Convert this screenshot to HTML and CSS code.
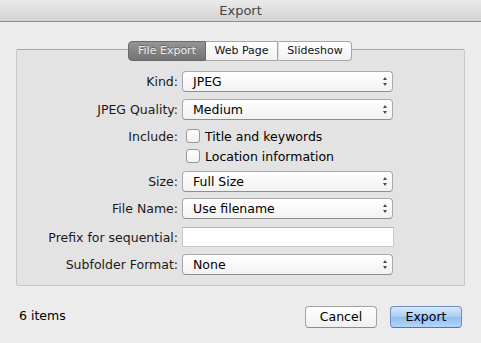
FILE: index.html
```html
<!DOCTYPE html>
<html>
<head>
<meta charset="utf-8">
<title>Export</title>
<link rel="stylesheet" href="styles.css">
</head>
<body>
<div class="window">
  <div class="titlebar">Export</div>
  <div class="content">
    <div class="tabs">
      <div class="tab active t1">File Export</div>
      <div class="tab t2">Web Page</div>
      <div class="tab sep t3">Slideshow</div>
    </div>
    <div class="panel">
      <div class="row r-kind">
        <div class="label">Kind:</div>
        <div class="select"><span>JPEG</span><span class="arrows"></span></div>
      </div>
      <div class="row r-quality">
        <div class="label">JPEG Quality:</div>
        <div class="select"><span>Medium</span><span class="arrows"></span></div>
      </div>
      <div class="row crow r-title">
        <div class="label">Include:</div>
        <label class="check"><span class="box"></span>Title and keywords</label>
      </div>
      <div class="row crow r-loc">
        <div class="label"></div>
        <label class="check"><span class="box"></span>Location information</label>
      </div>
      <div class="row r-size">
        <div class="label">Size:</div>
        <div class="select"><span>Full Size</span><span class="arrows"></span></div>
      </div>
      <div class="row r-name">
        <div class="label">File Name:</div>
        <div class="select"><span>Use filename</span><span class="arrows"></span></div>
      </div>
      <div class="row r-prefix">
        <div class="label">Prefix for sequential:</div>
        <div class="field"></div>
      </div>
      <div class="row r-sub">
        <div class="label">Subfolder Format:</div>
        <div class="select"><span>None</span><span class="arrows"></span></div>
      </div>
    </div>
    <div class="footer">
      <div class="count">6 items</div>
      <div class="buttons">
        <div class="btn">Cancel</div>
        <div class="btn primary">Export</div>
      </div>
    </div>
  </div>
</div>
</body>
</html>
```

FILE: styles.css
```css
html, body {
  margin: 0;
  padding: 0;
}
body {
  background: #ececec;
  font-family: "DejaVu Sans", "Liberation Sans", sans-serif;
  font-size: 12.5px;
  color: #000;
  width: 481px;
  height: 343px;
  overflow: hidden;
}
.window {
  width: 481px;
  height: 343px;
  background: #ececec;
}
.titlebar {
  height: 21px;
  border-bottom: 1px solid #8f8f8f;
  background: linear-gradient(#ebebeb, #d2d2d2);
  color: #454545;
  font-size: 13px;
  line-height: 22px;
  text-align: center;
}
.content {
  padding: 19px 16px 0 16px;
}
.tabs {
  display: flex;
  justify-content: center;
  height: 20px;
  position: relative;
  z-index: 2;
  padding-right: 1px;
}
.tab {
  box-sizing: border-box;
  height: 20px;
  line-height: 18px;
  border: 1px solid #a6a6a6;
  border-left: none;
  background: linear-gradient(#ffffff, #f1f1f1);
  text-align: center;
  white-space: nowrap;
  font-size: 11px;
  color: #111;
}
.t1 { width: 78px; }
.t2 { width: 72px; }
.t3 { width: 74px; }
.tab:first-child {
  border-left: 1px solid #a6a6a6;
  border-radius: 4px 0 0 4px;
}
.tab:last-child {
  border-radius: 0 4px 4px 0;
}
.tab.active {
  background: linear-gradient(#959595, #737373);
  border-color: #6a6a6a;
  color: #eeeeee;
  text-shadow: 0 -1px 0 rgba(0,0,0,0.3);
}
.tab.sep {
  border-left: 1px solid #dcdcdc;
}
.panel {
  margin-top: -12px;
  height: 214px;
  border: 1px solid #c7c7c7;
  border-top-color: #a9a9a9;
  border-radius: 2px;
  background: #e3e3e3;
  padding-top: 21px;
  box-sizing: content-box;
  display: flex;
  flex-direction: column;
}
.row {
  display: flex;
  align-items: center;
  height: 21px;
}
.label {
  width: 161px;
  text-align: right;
  padding-right: 4px;
  color: #1a1a1a;
  white-space: nowrap;
}
.r-quality { margin-top: 7px; }
.crow { height: 20px; }
.r-title { margin-top: 6px; }
.r-loc { margin-top: 0; }
.r-size { margin-top: 5px; }
.r-name { margin-top: 6px; }
.r-prefix { margin-top: 8px; height: 20px; }
.r-sub { margin-top: 7px; }
.select {
  height: 19px;
  border: 1px solid #a9a9a9;
  border-bottom-color: #8e8e8e;
  border-radius: 4px;
  background: linear-gradient(#ffffff, #f2f2f2);
  display: flex;
  align-items: center;
  justify-content: space-between;
  padding: 0 0 0 10px;
  box-sizing: content-box;
  width: 199px;
}
.arrows {
  width: 5px;
  height: 9px;
  margin-right: 4px;
  position: relative;
}
.arrows::before, .arrows::after {
  content: "";
  position: absolute;
  left: 0;
  border-left: 2.5px solid transparent;
  border-right: 2.5px solid transparent;
}
.arrows::before {
  top: 0;
  border-bottom: 3px solid #4a4a4a;
}
.arrows::after {
  bottom: 0;
  border-top: 3px solid #4a4a4a;
}
.field {
  width: 210px;
  height: 18px;
  background: #fff;
  border: 1px solid #c9c9c9;
  border-top-color: #b3b3b3;
}
.check {
  display: flex;
  align-items: center;
  margin-left: 4px;
}
.box {
  width: 12px;
  height: 12px;
  border: 1px solid #999;
  border-radius: 3px;
  background: linear-gradient(#ffffff, #f0f0f0);
  margin-right: 5px;
}
.footer {
  display: flex;
  justify-content: space-between;
  align-items: center;
  padding: 20px 3px 0 3px;
}
.count {
  margin-bottom: 3px;
}
.buttons {
  display: flex;
  gap: 13px;
}
.btn {
  width: 70px;
  height: 20px;
  line-height: 20px;
  text-align: center;
  border: 1px solid #a3a3a3;
  border-bottom-color: #8c8c8c;
  border-radius: 4px;
  background: linear-gradient(#ffffff, #f0f0f0);
}
.btn.primary {
  border-color: #6f8fbd;
  border-bottom-color: #5a77a3;
  background: linear-gradient(#d6e8fd, #a9cdf6 50%, #91bdf2 51%, #b2d6fb);
}
```
